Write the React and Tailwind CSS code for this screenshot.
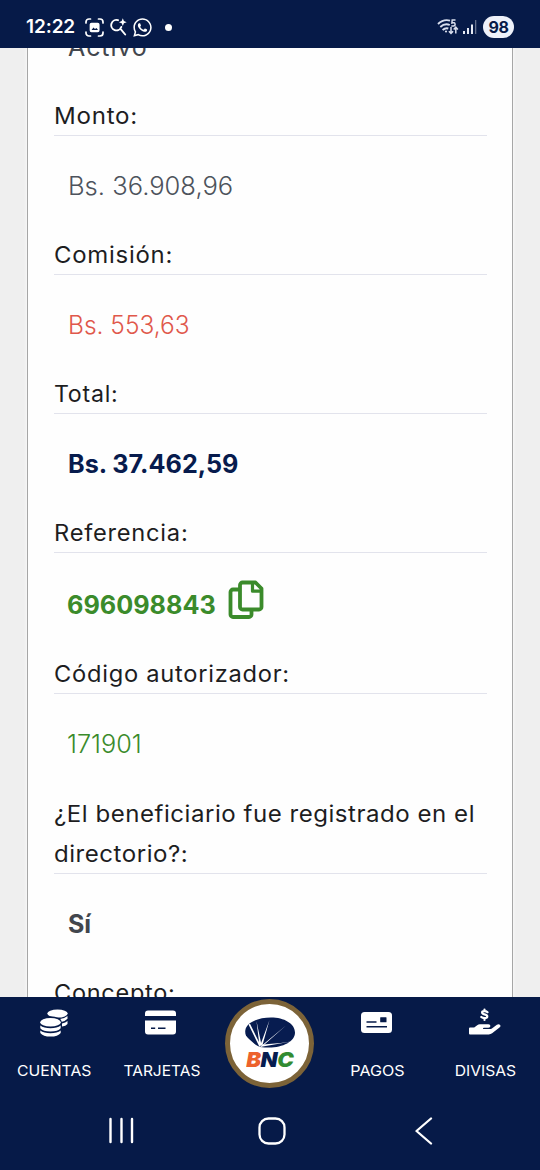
import { FaWhatsapp } from "react-icons/fa";

function Label({ children, tall }) {
  return (
    <div className={"w-[433px] whitespace-nowrap border-b border-[#e2e3ec] text-[22.5px] leading-[40px] text-[#1d1d1f] " + (tall ? "h-[80px]" : "h-[40px]")}>
      {children}
    </div>
  );
}

function Value({ children, className = "" }) {
  return <div className={"flex items-center pl-[14px] pt-px text-[25px] leading-none " + className}>{children}</div>;
}

function CopyIcon() {
  return (
    <svg className="ml-[14px] -mt-[9px] h-[40px] w-[36px] shrink-0" viewBox="0 0 36 40" fill="none" stroke="#3b8b2b" strokeWidth="3.8" strokeLinejoin="round">
      <path d="M11.5 9.5H5a2.5 2.5 0 0 0-2.500 2.500V34.500a2.500 2.500 0 0 0 2.500 2.500H21a2.500 2.500 0 0 0 2.500-2.500V30" />
      <path d="M14.500 2.500H27.500L33.500 8.500V27a2.500 2.500 0 0 1-2.500 2.500H14.500A2.500 2.500 0 0 1 12 27V5a2.500 2.500 0 0 1 2.500-2.500Z" />
      <path d="M24.500 2.500V11.200H33.500" strokeWidth="3.2" />
    </svg>
  );
}

function StatusBar() {
  return (
    <header className="flex h-[48px] shrink-0 items-start bg-[#061a48] pt-[15px] text-white">
      <div className="ml-[26px] w-[59px] whitespace-nowrap font-['Inter',sans-serif] text-[19px] font-semibold leading-[24px] tracking-[-0.1px]">12:22</div>
      <svg className="mt-[3px] h-[19px] w-[19px]" viewBox="0 0 19 19" fill="none" stroke="white" strokeWidth="1.7" strokeLinecap="round">
        <path d="M1 5V4a3 3 0 0 1 3-3h1.500M13.500 1H15a3 3 0 0 1 3 3v1M18 14v1a3 3 0 0 1-3 3h-1.500M5.500 18H4a3 3 0 0 1-3-3v-1" />
        <rect x="5.500" y="5.500" width="8.200" height="7.800" rx="1" fill="white" />
        <path d="M6.500 12l2-2.500 1.500 1.500 1.500-1 1.500 2z" fill="#061a48" stroke="none" />
      </svg>
      <svg className="ml-[6px] mt-[3px] h-[19px] w-[18px]" viewBox="0 0 18 19" fill="none" stroke="white" strokeWidth="1.9" strokeLinecap="round">
        <path d="M8 2.200A5.200 5.200 0 1 0 11.300 9M10.300 10.700L15.200 16.500" />
        <path d="M12.800.3l1.100 2.800 2.800 1.100-2.800 1.100-1.100 2.800-1.100-2.800L8.900 4.200l2.800-1.100z" fill="white" stroke="none" />
      </svg>
      <FaWhatsapp className="ml-[4px] mt-[2px] h-[21px] w-[21px]" />
      <span className="ml-[12px] mt-[8.500px] h-[7px] w-[7px] rounded-full bg-white" />
      <div className="grow" />
      <svg className="mt-[3px] h-[19px] w-[22px]" viewBox="0 0 22 19" fill="none" stroke="#d8deed" strokeWidth="1.9">
        <path d="M1 6Q6.500.8 13 2.600M3.300 9Q7.800 4.800 12.800 7M5.600 12Q8.500 9.400 11.300 10.500" />
        <path d="M18.500 2h-3.300l-.3 3q3-1 3.200 1.200T14.300 8" strokeWidth="1.500" />
        <circle cx="9" cy="13.500" r="1.100" fill="#d8deed" stroke="none" />
        <path d="M14 9v6.500M11.900 13.300L14 15.500l2.100-2.200M18.800 15.500V9.200M16.700 11.400l2.100-2.200 2.100 2.200" strokeWidth="1.500" />
      </svg>
      <svg className="ml-[4px] mt-[4px] h-[16px] w-[14px]" viewBox="0 0 14 16" fill="#e5e9f4">
        <rect y="12" width="2" height="3" /><rect x="4" y="9" width="2" height="6" /><rect x="8" y="5.500" width="2" height="9.500" /><rect x="12" y="1" width="1.300" height="14" fill="#65718f" />
      </svg>
      <div className="ml-[6px] mr-[26px] mt-px flex h-[22px] w-[31px] items-center justify-center rounded-full bg-[#eef1fa] font-['Inter',sans-serif] text-[16px] font-bold leading-none tracking-[-0.3px] text-[#061a48]">98</div>
    </header>
  );
}

function CoinsIcon() {
  return (
    <svg className="h-[28px] w-[28px]" viewBox="0 0 28 28" fill="white">
      <ellipse cx="17.500" cy="4.600" rx="10.200" ry="4" />
      <path d="M20 10q4.500-.6 7.500-3v2.800q-2.300 2.600-6.300 3.200zM22 14.500q3.600-.7 5.500-2.600v3q-1.600 2-5.500 2.700z" />
      <ellipse cx="10.500" cy="12.800" rx="11.200" ry="5.500" fill="#061a48" />
      <ellipse cx="10.500" cy="13.300" rx="10.300" ry="4.300" />
      <path d="M.3 16.500q3.500 2.800 10.200 2.800t10.200-2.800v2.800q-2.700 3.200-10.200 3.200T.3 19.300z" />
      <path d="M.3 21.500q3.500 2.800 10.200 2.800t10.200-2.800v2.400q-2.700 3.600-10.200 3.600T.3 23.900z" />
    </svg>
  );
}

function CardIcon() {
  return (
    <svg className="mr-[3px] h-[25px] w-[31px]" viewBox="0 0 31 25">
      <path d="M0 6V3.500Q0 .5 3 .5h25q3 0 3 3V6zM0 10.500h31V21.500q0 3-3 3H3q-3 0-3-3z" fill="white" />
      <path d="M6 18.300h4.200M13 18.300h7.500" stroke="#061a48" strokeWidth="1.500" />
    </svg>
  );
}

function CheckIcon() {
  return (
    <svg className="mr-px h-[21px] w-[31px]" viewBox="0 0 31 21">
      <rect width="31" height="21" rx="3.500" fill="white" />
      <path d="M5.500 10h10M5.500 14.700h20.500" stroke="#061a48" strokeWidth="1.500" />
      <rect x="19.200" y="5.200" width="6.300" height="5" rx=".5" fill="#061a48" />
    </svg>
  );
}

function HandIcon() {
  return (
    <svg className="h-[29px] w-[32px]" viewBox="0 0 32 29" fill="white">
      <path d="M18.500 4.200Q17.500 3.200 15.500 3.200c-3.200 0-3.200 2.500 0 3.100 3.700.7 3.700 3.800 0 3.800q-2 0-3.200-1.100M15.500 1.500v1.500M15.500 10.500v1.500" fill="none" stroke="white" strokeWidth="2.200" strokeLinecap="round" />
      <path d="M1 19.500h4.200l3-2.300q1.200-.9 2.700-.9h8.500q2 0 2 1.700t-2 1.700h-4.500q-.9 0-.9.700t.9.700h6q1.200 0 2-.6l5-3.700q1.900-1.200 3.200.1 1 1.400-.6 2.700l-7.400 5.700q-1.500 1.100-3.300 1.100H1q-1 0-1-1v-4.900q0-1 1-1z" />
    </svg>
  );
}

function BankLogo() {
  return (
    <div className="flex h-[89px] w-[89px] shrink-0 flex-col items-center rounded-full border-[5.500px] border-[#7c6338] bg-white pt-[13px]">
      <svg className="h-[31px] w-[50px]" viewBox="0 0 50 31">
        <path d="M15 30C5 26-.5 20 .3 13.500 1.200 5.500 13 .5 26 .5c13 0 24 6 24 15S38 30.500 24 30.500q-4.500 0-9-.5z" fill="#071c50" />
        <g fill="white">
          <path d="M14.500 30L3.500 7.500 5 6.800 15.500 28zM14.500 29L11.500 4 16.500 28zM15 29L24.500 3 17.500 28zM15 30L41 8.500 18 28.800z" />
          <path d="M15 30L48 24.200Q32 27 18 27.500zM0 18L4 22 14 31H0z" />
        </g>
      </svg>
      <div className="mt-[3px] flex h-[18px] origin-center scale-x-[1.08] items-center font-['Inter',sans-serif] text-[20.500px] font-black italic leading-none tracking-[-0.4px]">
        <span className="text-[#ed622c]">B</span><span className="text-[#071c50]">N</span><span className="text-[#328c32]">C</span>
      </div>
    </div>
  );
}

function NavItem({ icon, label, labelClass }) {
  return (
    <div className="flex w-[108px] shrink-0 flex-col items-center">
      <div className="flex h-[51px] items-center">{icon}</div>
      <div className={"mt-[12px] whitespace-nowrap text-[14.500px] leading-[22px] " + labelClass}>{label}</div>
    </div>
  );
}

export default function App() {
  return (
    <div className="flex h-[1170px] w-[540px] flex-col overflow-hidden bg-[#efefef] font-['Inter',sans-serif]">
      <StatusBar />
      <main className="flex h-[949px] shrink-0 overflow-hidden">
        <div className="ml-[27px] h-full w-[486px] overflow-hidden border-x-[1.500px] border-[#a6a6a6] bg-[#fefefe] pl-[26px] shadow-[0_0_3px_1px_#f8f8f8]">
          <div className="-mt-[50px]">
            <Value className="h-[98px] text-[#42464d]"><span className="inline-block origin-left tracking-[0.9px]">Activo</span></Value>
            <Label><span className="inline-block origin-left scale-x-[1.07] tracking-[0.7px]">Monto:</span></Label>
            <Value className="h-[99px] text-[#4d535c]"><span className="inline-block origin-left scale-x-[1.022] font-[350]">Bs. 36.908,96</span></Value>
            <Label><span className="inline-block origin-left scale-x-[1.063] tracking-[0.7px]">Comisión:</span></Label>
            <Value className="h-[99px] text-[#e0584b]"><span className="inline-block origin-left scale-x-[0.98] font-[350]">Bs. 553,63</span></Value>
            <Label><span className="inline-block origin-left scale-x-[1.03] tracking-[0.7px]">Total:</span></Label>
            <Value className="h-[99px] text-[#071b4d]"><span className="inline-block origin-left scale-x-[1.007] font-bold">Bs. 37.462,59</span></Value>
            <Label><span className="inline-block origin-left scale-x-[1.053] tracking-[0.7px]">Referencia:</span></Label>
            <Value className="h-[101px] text-[#3b8b2b]"><span className="-ml-px inline-block origin-left scale-x-[1.01] pt-[2px] font-bold">696098843</span><CopyIcon /></Value>
            <Label><span className="inline-block origin-left scale-x-[1.052] tracking-[0.7px]">Código autorizador:</span></Label>
            <Value className="h-[100px] pt-[3px] text-[#3b8b2b]"><span className="-ml-px inline-block origin-left scale-x-[1.01] font-[350]">171901</span></Value>
            <Label tall><span className="inline-block origin-left scale-x-[1.068] tracking-[0.5px]">¿El beneficiario fue registrado en el<br />directorio?:</span></Label>
            <Value className="h-[99px] text-[#42464d]"><span className="font-bold">Sí</span></Value>
            <Label><span className="inline-block origin-left scale-x-[1.045] tracking-[0.7px]">Concepto:</span></Label>
          </div>
        </div>
      </main>
      <footer className="h-[173px] shrink-0 bg-[#061a48] text-white">
        <nav className="flex h-[101px] items-start">
          <NavItem icon={<CoinsIcon />} label="CUENTAS" labelClass="scale-x-[1.085]" />
          <NavItem icon={<CardIcon />} label="TARJETAS" labelClass="scale-x-[1.07]" />
          <div className="flex w-[107px] justify-center pt-[2px]"><BankLogo /></div>
          <NavItem icon={<CheckIcon />} label="PAGOS" labelClass="scale-x-[1.11]" />
          <NavItem icon={<HandIcon />} label="DIVISAS" labelClass="scale-x-[1.08]" />
        </nav>
        <div className="flex h-[65px] items-center pl-[108px]">
          <svg className="h-[27px] w-[27px]" viewBox="0 0 27 27" stroke="white" strokeWidth="2.400" strokeLinecap="round"><path d="M2.500 2v23M13.500 2v23M24 2v23" /></svg>
          <svg className="ml-[123px] h-[28px] w-[28px]" viewBox="0 0 28 28"><rect x="1.500" y="1.500" width="25" height="25" rx="9" fill="none" stroke="white" strokeWidth="2.300" /></svg>
          <svg className="ml-[128px] h-[28px] w-[20px]" viewBox="0 0 20 28" fill="none" stroke="white" strokeWidth="2.300" strokeLinecap="round" strokeLinejoin="round"><path d="M17 1.500L2.500 14L17 26.500" /></svg>
        </div>
      </footer>
    </div>
  );
}
